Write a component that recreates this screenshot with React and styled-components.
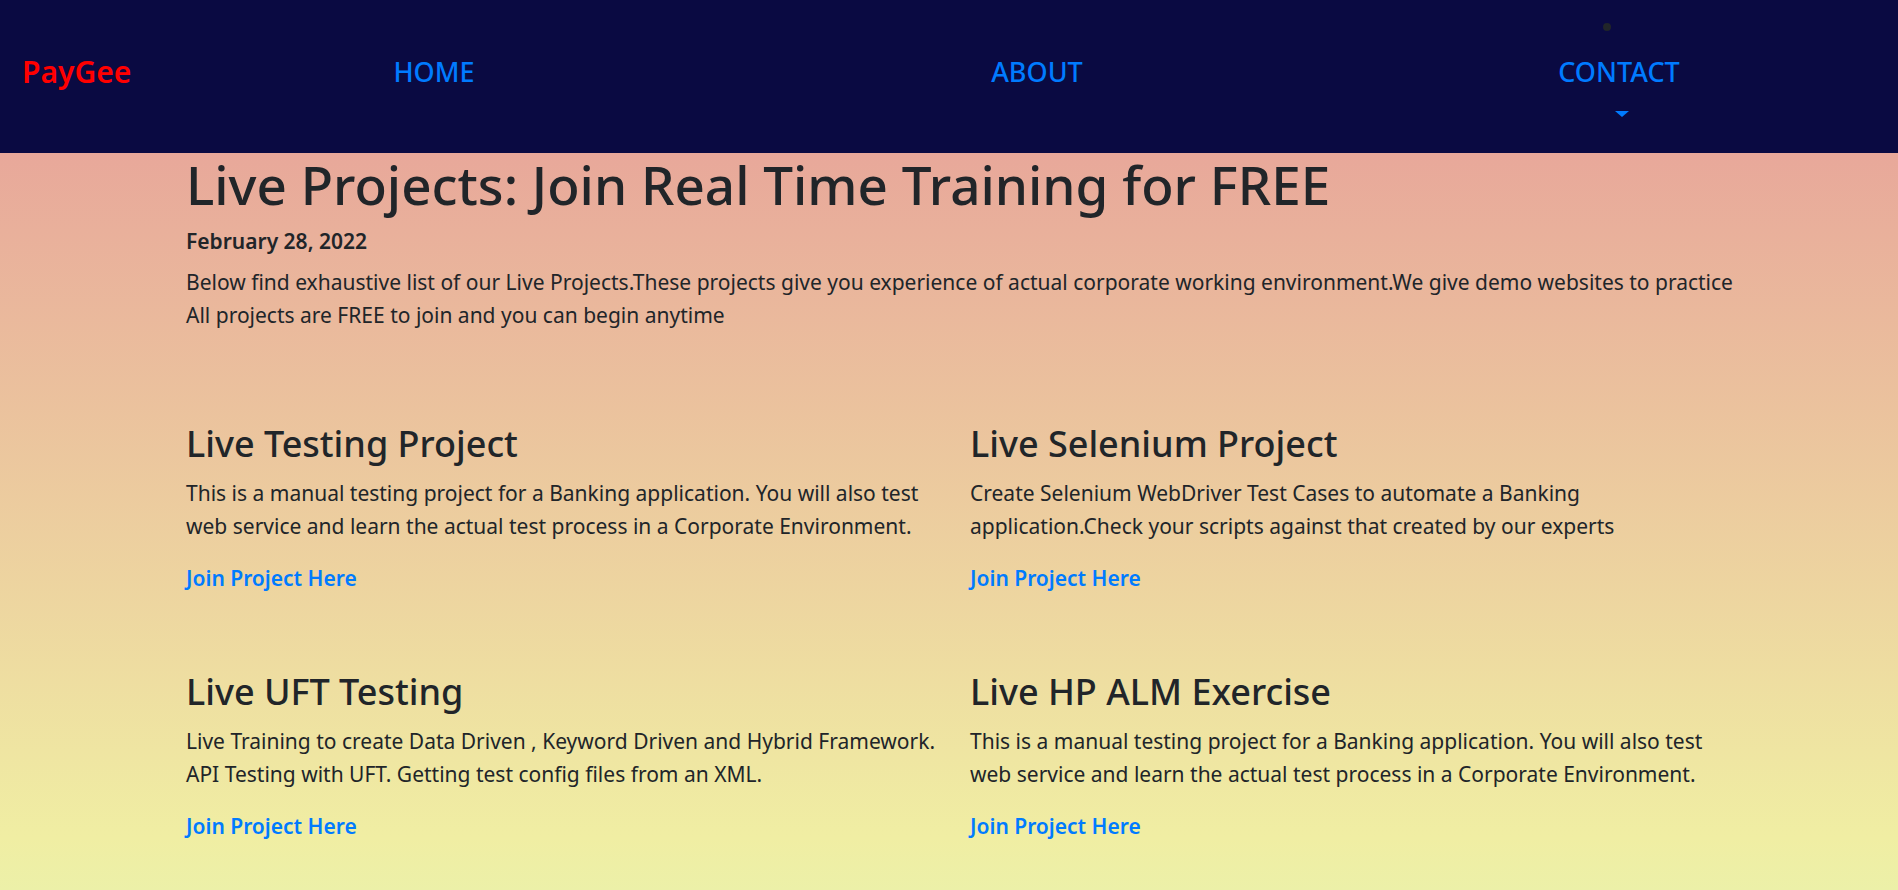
import React from 'react';
import styled, { createGlobalStyle } from 'styled-components';

const Global = createGlobalStyle`
  *, *::before, *::after { box-sizing: border-box; }
  body {
    margin: 0;
    font-family: "Noto Sans", "Liberation Sans", sans-serif;
    font-size: 21px;
    line-height: 33px;
    color: #212529;
  }
  a { color: #007bff; text-decoration: none; }
`;

const Page = styled.div`
  display: flex;
  flex-direction: column;
  min-height: 100vh;
`;

const Nav = styled.nav`
  display: flex;
  align-items: flex-start;
  padding: 6px 0 6px 22px;
  background: #0a0a42;
`;

const Brand = styled.a`
  && { color: #ff0000; }
  width: 112px;
  padding: 46px 0;
  font-size: 30px;
  line-height: 40px;
  font-weight: 600;
`;

const Menu = styled.ul`
  flex: 1;
  display: grid;
  grid-template-columns: 100fr 101fr 93fr;
  align-items: start;
  margin: 0;
  padding: 0;
  list-style: none;
`;

const MenuItem = styled.li`
  display: flex;
  flex-direction: column;
  align-items: center;
  font-size: 27px;
  line-height: 41px;
  font-weight: 500;
`;

/* Keeps every label on one line, whether or not it has a marker above it. */
const Marker = styled.span`
  display: flex;
  align-items: center;
  height: 45px;
  padding-right: 24px;
  padding-bottom: 3px;
  &::before {
    content: "";
    width: 8px;
    height: 8px;
    border-radius: 50%;
    background: ${(p) => (p.$visible ? '#212529' : 'transparent')};
  }
`;

const MenuLink = styled.a`
  display: flex;
  flex-direction: column;
  align-items: center;
`;

const Caret = styled.span`
  margin: 19px 0 30px 6px;
  border: 7px solid transparent;
  border-top: 6px solid #007bff;
  border-bottom: 0;
`;

const Content = styled.main`
  flex: 1;
  padding: 0 160px 32px 186px;
  background: linear-gradient(#e8a89a, #f0eea3 93%, #ecf0a8);
`;

const Title = styled.h1`
  margin: 0;
  font-size: 53px;
  line-height: 64px;
  font-weight: 500;
`;

const DateLine = styled.h5`
  margin: 8px 0 9px;
  font-size: 21px;
  line-height: 32px;
  font-weight: 600;
`;

const Text = styled.p`
  margin: 0;
`;

const Grid = styled.section`
  display: grid;
  grid-template-columns: 1fr 1fr;
  margin-top: 88px;
  gap: 73px 16px;
`;

const Heading = styled.h2`
  margin: 0 0 9px;
  font-size: 36px;
  line-height: 48px;
  font-weight: 500;
`;

const Join = styled.a`
  display: block;
  width: fit-content;
  margin-top: 19px;
  font-weight: 600;
`;

const menu = [
  { label: 'HOME' },
  { label: 'ABOUT' },
  { label: 'CONTACT', dropdown: true },
];

const projects = [
  {
    title: 'Live Testing Project',
    lines: [
      'This is a manual testing project for a Banking application. You will also test',
      'web service and learn the actual test process in a Corporate Environment.',
    ],
  },
  {
    title: 'Live Selenium Project',
    lines: [
      'Create Selenium WebDriver Test Cases to automate a Banking',
      'application.Check your scripts against that created by our experts',
    ],
  },
  {
    title: 'Live UFT Testing',
    lines: [
      'Live Training to create Data Driven , Keyword Driven and Hybrid Framework.',
      'API Testing with UFT. Getting test config files from an XML.',
    ],
  },
  {
    title: 'Live HP ALM Exercise',
    lines: [
      'This is a manual testing project for a Banking application. You will also test',
      'web service and learn the actual test process in a Corporate Environment.',
    ],
  },
];

export default function App() {
  return (
    <Page>
      <Global />
      <Nav>
        <Brand href="#">PayGee</Brand>
        <Menu>
          {menu.map(({ label, dropdown }) => (
            <MenuItem key={label}>
              <Marker $visible={dropdown} />
              <MenuLink href="#">
                {label}
                {dropdown && <Caret />}
              </MenuLink>
            </MenuItem>
          ))}
        </Menu>
      </Nav>
      <Content>
        <Title>Live Projects: Join Real Time Training for FREE</Title>
        <DateLine>February 28, 2022</DateLine>
        <Text>
          Below find exhaustive list of our Live Projects.These projects give you experience of actual corporate working environment.We give demo websites to practice
          <br />
          All projects are FREE to join and you can begin anytime
        </Text>
        <Grid>
          {projects.map(({ title, lines }) => (
            <article key={title}>
              <Heading>{title}</Heading>
              <Text>
                {lines[0]}
                <br />
                {lines[1]}
              </Text>
              <Join href="#">Join Project Here</Join>
            </article>
          ))}
        </Grid>
      </Content>
    </Page>
  );
}
